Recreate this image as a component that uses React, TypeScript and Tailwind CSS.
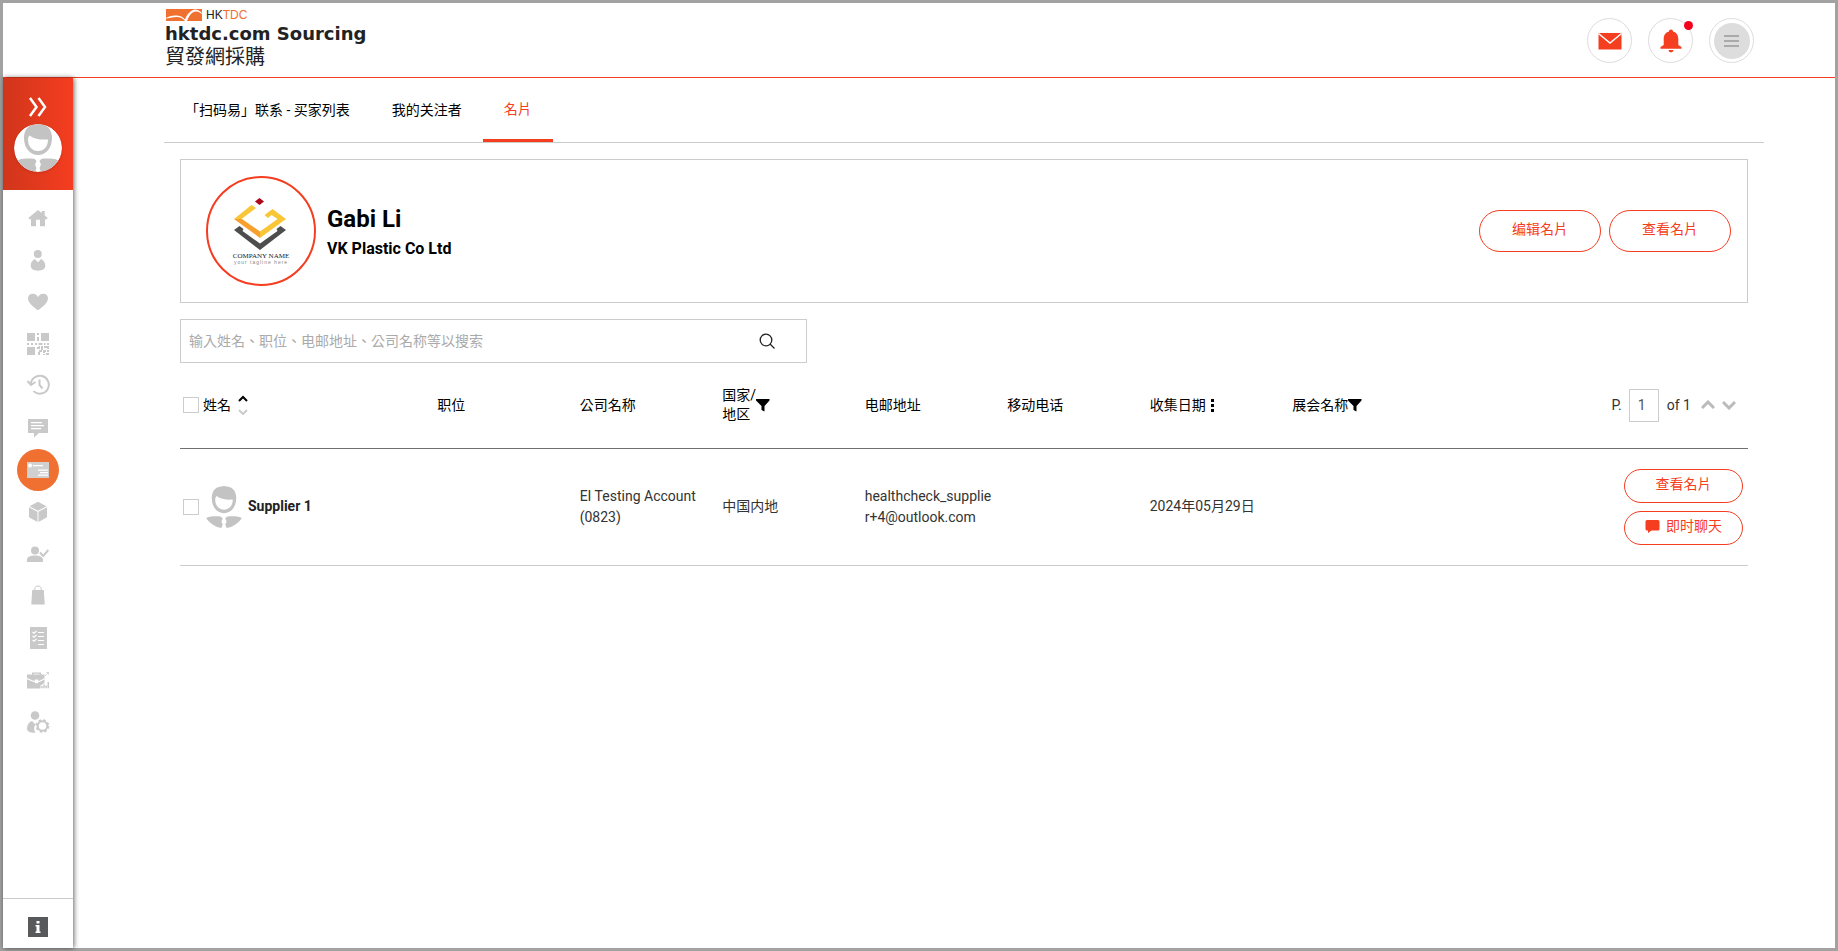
import React from 'react';

const FONT = "font-['Roboto','Noto_Sans_CJK_TC',sans-serif]";

function Avatar({ className }: { className?: string }) {
  return (
    <svg viewBox="0 0 48 48" className={className} aria-hidden="true">
      <defs>
        <clipPath id="avatar-clip">
          <circle cx="24" cy="24" r="24" />
        </clipPath>
      </defs>
      <g clipPath="url(#avatar-clip)">
        <rect width="48" height="48" fill="#fff" />
        <path
          fill="#c3c3c3"
          fillRule="evenodd"
          d="M24 0C14 0 10 6 10 14c0 10 6 17 14 17s14-7 14-17C38 6 34 0 24 0zM15.500 11.500c5 3.500 11 4.500 18.500 4 0 7-4 11.500-10 11.500S14 22 14 16c0-2 .5-3.500 1.500-4.500z"
        />
        <path
          fill="#c3c3c3"
          d="M2 38c2-2.500 6-3.500 10-3.500h6c2 0 3.500.8 4.500 2.500l-1.500 3.500 1.500 3.500-1.500 4H2zM46 38c-2-2.500-6-3.500-10-3.500h-6c-2 0-3.500.8-4.500 2.500l1.500 3.500-1.500 3.500 1.500 4H46z"
        />
      </g>
    </svg>
  );
}

function CompanyLogo() {
  return (
    <svg viewBox="0 0 106 106" className="size-full" role="img" aria-label="Company logo">
      <path d="M51.500 20l4.500 3.500-4.500 3.500-4.500-3.500z" fill="#b0061c" />
      <path d="M43.500 27l4.500 3-14.500 11H26z" fill="#f9c637" />
      <path d="M26 41h8l18 12.500V60z" fill="#f9a02c" />
      <path d="M52 60v-6.500L69.500 41l-6-4-3.500 3-3.500-3 8-6L78 41z" fill="#f9c637" />
      <path d="M26 52l5.500-4 4 3-1 2L52 65.500 69.500 53l-1-2 4-3 5.500 4-26 20z" fill="#4d4d4d" />
      <text x="53" y="80" textAnchor="middle" fontSize="7" fill="#222" fontFamily="Liberation Serif, serif">COMPANY NAME</text>
      <text x="53" y="86" textAnchor="middle" fontSize="5" letterSpacing="1" fill="#888" fontFamily="Liberation Sans, sans-serif">your tagline here</text>
    </svg>
  );
}

function FilterIcon() {
  return (
    <svg viewBox="0 0 14 14" className="size-3.5 shrink-0" aria-hidden="true">
      <path d="M0 1h13.500v1.500L8.500 8v5.500L5.500 12V8L0 2.500z" />
    </svg>
  );
}

function SideIcon({ children }: { children: React.ReactNode }) {
  return (
    <svg viewBox="0 0 24 24" className="size-6" fill="currentColor" aria-hidden="true">
      {children}
    </svg>
  );
}

const menu = [
  { label: '主页', icon: <path d="M12 4l3.700 3.100V5h3v4.600l3 2.400-1 1.300H19v7h-5v-6.500h-4v6.500H5v-7H3.300l-1-1.300z" /> },
  {
    label: '个人资料',
    icon: (
      <>
        <circle cx="11.800" cy="6" r="4" />
        <path d="M8.800 11c-2.600 1.200-4.100 4-4.100 7 0 2.900 3.300 4.700 7.300 4.700s7.300-1.800 7.300-4.700c0-3-1.500-5.800-4.100-7L12 14.200z" />
      </>
    ),
  },
  { label: '收藏', icon: <path d="M12 20.300C7 16.800 2 12.800 2 8.300c0-2.800 2-4.600 4.700-4.600 2.300 0 4.200 1.200 5.300 3.300 1.100-2.100 3-3.300 5.300-3.300C20 3.700 22 5.500 22 8.300c0 4.500-5 8.500-10 12z" /> },
  {
    label: '扫码易',
    icon: (
      <path d="M1 1h8v8H1zM15 1h8v8h-8zM1 15h8v8H1zM11 1h2v2h-2zM11 5h2v4h-2zM1 11h2v2H1zM5 11h2v2H5zM9 11h2v2H9zM12.500 11h4v2h-4zM18 11h1.500v2H18zM21 11h2v2h-2zM11 15h1.500v-1H14v3h-3zM15 14h2v4h-2zM18 14h5v3h-2v-1h-3zM13 18h3v2h-2v3h-2v-3h1zM17 18h3v2h-1v1h-2zM21 18h2v2h-2zM17 22h2v1h-2zM20 21h3v2h-3z" />
    ),
  },
  {
    label: '浏览记录',
    icon: (
      <g fill="none" stroke="currentColor" strokeWidth="2">
        <path d="M4.800 10.500a9 9 0 1 1 2.700 6.600" />
        <path d="M1.500 7l3.500 4L9.500 8M13.500 5.500V11l3 3.500" />
      </g>
    ),
  },
  { label: '讯息', icon: <path fillRule="evenodd" d="M2 3h20v14h-9l-5 4.500V17H2zM5 6v1.200h11V6zM5 9v1.200h13V9zM5 12v1.200h10V12z" /> },
  {
    label: '名片',
    active: true,
    icon: (
      <>
        <path d="M1 4h22v16H1z" fill="#d0d0d0" />
        <g fill="#fff">
          <circle cx="4" cy="7.500" r="2" />
          <path d="M7 7h10v1.200H7zM12 11.500h10v1.200H12zM14 14h8v1.200h-8zM12 16.500h10v1.200H12z" />
        </g>
      </>
    ),
  },
  { label: '产品', icon: <path d="M12 1.700l8.500 4.600L12 10.800 3.500 6.300zM3 7.300l8.500 4.500v10.300L3 17.300zM21 7.300l-8.500 4.500v10.300l8.500-4.800z" /> },
  {
    label: '关注者',
    icon: (
      <>
        <circle cx="9" cy="8.500" r="4" />
        <path d="M1 20v-2.500C1 14.800 4.500 13.500 9 13.500s8 1.300 8 4V20z" />
        <path d="M14 10.500l3.200 3.500L22.300 8" fill="none" stroke="#fff" strokeWidth="4" />
        <path d="M14 10.500l3.200 3.500L22.300 8" fill="none" stroke="currentColor" strokeWidth="2" />
      </>
    ),
  },
  {
    label: '订单',
    icon: (
      <>
        <path d="M6.200 6h11.600l.9 14.500H5.300z" />
        <path d="M8.800 7V5c0-4 6.400-4 6.400 0v2" fill="none" stroke="currentColor" strokeWidth="1" />
      </>
    ),
  },
  {
    label: '报价',
    icon: (
      <>
        <path d="M4 1h17v22H4z" />
        <g fill="none" stroke="#fff" strokeWidth="1.200">
          <path d="M6.500 6l1.500 1.300L10.500 5M12 6.500h6M6.500 10l1.500 1.300L10.500 9M12 10.500h6M6.500 14l1.500 1.300L10.500 13M12 14.500h6M12 18.500h6" />
        </g>
      </>
    ),
  },
  {
    label: '业务',
    icon: (
      <>
        <path fillRule="evenodd" d="M1 6.500h5v-2h9v2h3.500v3.800l-5 2.500h-1.300v-1.300H8.800v1.300H7.500L1 10zM7.500 6.500h6v-.8h-6z" />
        <path d="M1 11.300l6.500 2.700h1.300v1.300h3.400V14h1.300l5-2.500v3.500l-4 2.500v3H1z" />
        <path d="M15.200 18h1.500v2.300h-1.500zM17.300 16.500h1.500v3.800h-1.500zM19.400 17.500h1.500v2.800h-1.500zM21.500 14H23v6.300h-1.500z" />
        <path d="M19 8l3.500-3.500M20.500 4.500h2v2" fill="none" stroke="currentColor" strokeWidth=".8" />
      </>
    ),
  },
  {
    label: '帐户设定',
    icon: (
      <>
        <circle cx="9" cy="5.500" r="4.300" />
        <path d="M6 11c-3 1-5 4-5 7.500C1 21.500 4 23 9.500 22.800c-2-3.500-1.700-7 1-9.300L9 14z" />
        <circle cx="16.500" cy="16" r="4.800" fill="none" stroke="currentColor" strokeWidth="2" />
        <circle cx="16.500" cy="16" r="5.900" fill="none" stroke="currentColor" strokeWidth="1.800" strokeDasharray="2.600 2.030" />
      </>
    ),
  },
];

const tabs = ['「扫码易」联系 - 买家列表', '我的关注者', '名片'];

const checkbox = 'appearance-none size-4 shrink-0 border border-[#ccc] bg-white checked:bg-[#f53d20]';
const pill = 'flex items-center justify-center rounded-full border border-[#f53d20] text-sm text-[#f53d20] pb-1 hover:bg-[#f53d20] hover:text-white';
const roundButton = 'relative flex size-[45px] items-center justify-center rounded-full border border-[#ddd]';

function Header() {
  return (
    <header className="flex h-[75px] shrink-0 items-start justify-between border-b border-[#f53d20] pl-[161px] pr-[81px]">
      <a href="#" className="flex flex-col pt-[5px] text-[#222]">
        <span className="flex h-3.5 items-center gap-0.5">
          <svg viewBox="0 0 40 12" className="h-3 w-10" aria-hidden="true">
            <path d="M2 0h36v12H2z" fill="#f07030" />
            <path d="M0 10c5-3 9-4 13-3.500 4 .5 6 1.500 8 4C23 5 27 1 31 .5c4 0 7 3 9 6.500-3-3-5-4.500-8-4.500-4 0-7 4-9 9.500h-2c-2-2.500-5-4-8-4-4 0-8 1-13 2z" fill="#fff" />
          </svg>
          <span className="font-['Liberation_Sans',sans-serif] text-xs leading-3.5">
            HK<span className="text-[#f07030]">TDC</span>
          </span>
        </span>
        <span className="pl-px font-['DejaVu_Sans',sans-serif] text-lg font-bold leading-6">hktdc.com Sourcing</span>
        <span className="pl-px font-['Noto_Sans_CJK_TC',sans-serif] text-xl leading-5">貿發網採購</span>
      </a>
      <div className="flex items-center gap-4 pt-[15px]">
        <button className={roundButton} aria-label="讯息">
          <svg viewBox="0 0 24 18" className="h-[18px] w-6" aria-hidden="true">
            <path d="M.5 1h23v16.500H.5z" fill="#f53d20" />
            <path d="M.5 1.500L12 11 23.500 1.500" fill="none" stroke="#fff" strokeWidth="1.500" />
          </svg>
        </button>
        <button className={roundButton} aria-label="通知">
          <svg viewBox="0 0 22 24" className="h-6 w-[22px]" fill="#f53d20" aria-hidden="true">
            <path d="M11 .5c1.300 0 2 .9 2 2 3.700 1 5.300 4 5.300 7.500v6L21.500 18v1.800h-21V18L3.700 16v-6c0-3.500 1.600-6.500 5.300-7.500 0-1.100.7-2 2-2zM8.500 21h5c-.3 1.500-1 2.300-2.500 2.300S8.800 22.500 8.500 21z" />
          </svg>
          <span className="absolute -right-px top-0.5 size-[9px] rounded-full bg-[#f5001d]" />
        </button>
        <button className={roundButton} aria-label="菜单">
          <span className="flex size-9 flex-col items-center justify-center gap-[3px] rounded-full bg-[#ddd]">
            <span className="h-0.5 w-[15px] bg-[#aaa]" />
            <span className="h-0.5 w-[15px] bg-[#aaa]" />
            <span className="h-0.5 w-[15px] bg-[#aaa]" />
          </span>
        </button>
      </div>
    </header>
  );
}

function Sidebar() {
  return (
    <aside className="flex w-[70px] shrink-0 flex-col bg-white shadow-[1px_0_5px_rgba(0,0,0,0.6)]">
      <div className="flex h-28 flex-col items-center bg-linear-to-r from-[#d0361b] to-[#f53d20] pt-[19px]">
        <button aria-label="展开">
          <svg viewBox="0 0 20 20" className="size-5" fill="none" stroke="#fff" strokeWidth="2.500" aria-hidden="true">
            <path d="M2 1l6.500 9L2 19M10.500 1l6.500 9-6.500 9" />
          </svg>
        </button>
        <Avatar className="mt-[7px] size-12 rounded-full shadow" />
      </div>
      <nav className="flex flex-col items-center pt-[7px]">
        {menu.map((item) => (
          <a
            key={item.label}
            href="#"
            aria-label={item.label}
            className={`flex size-[42px] items-center justify-center rounded-full ${item.active ? 'bg-[#ef7030]' : 'text-[#c9c9c9]'}`}
          >
            <SideIcon>{item.icon}</SideIcon>
          </a>
        ))}
      </nav>
      <div className="mt-auto flex h-[50px] justify-center border-t border-[#ccc] pt-[18px]">
        <a href="#" aria-label="说明" className="size-5">
          <svg viewBox="0 0 20 20" className="size-5" aria-hidden="true">
            <path d="M0 0h20v20H0z" fill="#58595b" />
            <path d="M8.500 4h3v2.500h-3zM7.500 8h4v6.500h1V16h-5v-1.500h1v-5h-1z" fill="#fff" />
          </svg>
        </a>
      </div>
    </aside>
  );
}

function ProfileCard() {
  return (
    <section className="flex items-center justify-between border border-[#ccc] py-4 pl-[25px] pr-4">
      <div className="flex items-center gap-[11px]">
        <div className="size-[110px] rounded-full border-2 border-[#f53d20]">
          <CompanyLogo />
        </div>
        <div className="pt-1 font-bold text-black">
          <h1 className="text-2xl leading-8">Gabi Li</h1>
          <p className="text-base leading-7">VK Plastic Co Ltd</p>
        </div>
      </div>
      <div className="flex gap-2">
        <button className={`${pill} h-[42px] w-[122px]`}>编辑名片</button>
        <button className={`${pill} h-[42px] w-[122px]`}>查看名片</button>
      </div>
    </section>
  );
}

function Chevron({ up }: { up?: boolean }) {
  return (
    <svg viewBox="0 0 14 10" className="h-2.5 w-3.5" fill="none" stroke="#bbb" strokeWidth="3" aria-hidden="true">
      <path d={up ? 'M1 8l6-6 6 6' : 'M1 2l6 6 6-6'} />
    </svg>
  );
}

function ContactTable() {
  return (
    <table className="w-full table-fixed text-left text-sm">
      <thead>
        <tr className="h-[85px] border-b border-[#707070] text-black [&>th]:p-0 [&>th]:font-normal">
          <th className="w-[16.4%]">
            <div className="flex items-center pl-[3px]">
              <input id="select-all" type="checkbox" className={checkbox} />
              <label htmlFor="select-all" className="pl-1">姓名</label>
              <button className="ml-[7px]" aria-label="排序">
                <svg viewBox="0 0 10 20" className="h-5 w-2.5" fill="none" strokeWidth="2" aria-hidden="true">
                  <path d="M1 6l4-4 4 4" stroke="#000" />
                  <path d="M1 15l4 4 4-4" stroke="#ccc" />
                </svg>
              </button>
            </div>
          </th>
          <th className="w-[9.09%]">职位</th>
          <th className="w-[9.09%]">公司名称</th>
          <th className="w-[9.09%]">
            <button className="flex items-center text-left">
              <span className="w-[34px] leading-[19px]">国家/地区</span>
              <FilterIcon />
            </button>
          </th>
          <th className="w-[9.09%]">电邮地址</th>
          <th className="w-[9.09%]">移动电话</th>
          <th className="w-[9.09%]">
            <button className="flex items-center gap-[5px]">
              收集日期
              <svg viewBox="0 0 4 14" className="h-3.5 w-1" aria-hidden="true">
                <path d="M0 1h3v3H0zM0 6h3v3H0zM0 11h3v3H0z" />
              </svg>
            </button>
          </th>
          <th className="w-[9.09%]">
            <button className="flex items-center">
              展会名称
              <FilterIcon />
            </button>
          </th>
          <th>
            <div className="flex items-center justify-end pr-3 text-[#333]">
              <label htmlFor="page">P.</label>
              <input id="page" type="text" defaultValue="1" className="ml-[7px] h-[33px] w-[30px] border border-[#ccc] pl-2 text-[#555] outline-none" />
              <span className="ml-2">of 1</span>
              <button className="ml-2.5" aria-label="上一页"><Chevron up /></button>
              <button className="ml-[7px]" aria-label="下一页"><Chevron /></button>
            </div>
          </th>
        </tr>
      </thead>
      <tbody>
        <tr className="h-[117px] border-b border-[#ccc] text-[#333] [&>td]:p-0 [&>td]:leading-[21px]">
          <td>
            <div className="flex items-center pl-[3px]">
              <input type="checkbox" aria-label="Supplier 1" className={checkbox} />
              <Avatar className="ml-1 size-[42px]" />
              <span className="pl-[3px] font-bold text-[#222]">Supplier 1</span>
            </div>
          </td>
          <td />
          <td>EI Testing Account (0823)</td>
          <td>中国内地</td>
          <td className="break-all"><div className="pr-3.5">healthcheck_supplier+4@outlook.com</div></td>
          <td />
          <td>2024年05月29日</td>
          <td />
          <td>
            <div className="flex flex-col items-end gap-2 pr-[5px]">
              <button className={`${pill} h-[34px] w-[119px]`}>查看名片</button>
              <button className={`${pill} h-[34px] w-[119px] gap-1.5`}>
                <svg viewBox="0 0 15 14" className="h-3.5 w-[15px]" fill="currentColor" aria-hidden="true">
                  <path d="M2 1h11a1.500 1.500 0 0 1 1.500 1.500v7.500A1.500 1.500 0 0 1 13 11.500H6.500L3 14v-2.500H2A1.500 1.500 0 0 1 .5 10V2.500A1.500 1.500 0 0 1 2 1z" />
                </svg>
                即时聊天
              </button>
            </div>
          </td>
        </tr>
      </tbody>
    </table>
  );
}

export default function App() {
  return (
    <div className={`flex min-h-screen flex-col border-[3px] border-[#a2a2a2] bg-white ${FONT}`}>
      <Header />
      <div className="flex grow">
        <Sidebar />
        <main className="grow pl-[91px] pr-[71px]">
          {/* Tabs */}
          <nav className="flex h-[65px] border-b border-[#ccc] text-sm text-black">
            {tabs.map((tab) => (
              <a
                key={tab}
                href="#"
                className={`flex items-center px-[21px] ${tab === '名片' ? 'border-b-[3px] border-[#f53d20] text-[#f53d20]' : ''}`}
              >
                {tab}
              </a>
            ))}
          </nav>

          <div className="px-4 pt-4">
            <ProfileCard />

            {/* Search */}
            <form className="mt-4 flex h-11 w-2/5 items-center border border-[#ccc]">
              <input
                type="text"
                aria-label="搜索"
                placeholder="输入姓名、职位、电邮地址、公司名称等以搜索"
                className="h-full grow pl-2 text-sm outline-none placeholder:text-[#aaa]"
              />
              <button type="button" aria-label="搜索" className="mr-[31px]">
                <svg viewBox="0 0 16 16" className="size-4" fill="none" stroke="#222" strokeWidth="1.300" aria-hidden="true">
                  <circle cx="7" cy="7" r="5.800" />
                  <path d="M11 11l4.500 4.500" />
                </svg>
              </button>
            </form>

            <ContactTable />
          </div>
        </main>
      </div>
    </div>
  );
}
